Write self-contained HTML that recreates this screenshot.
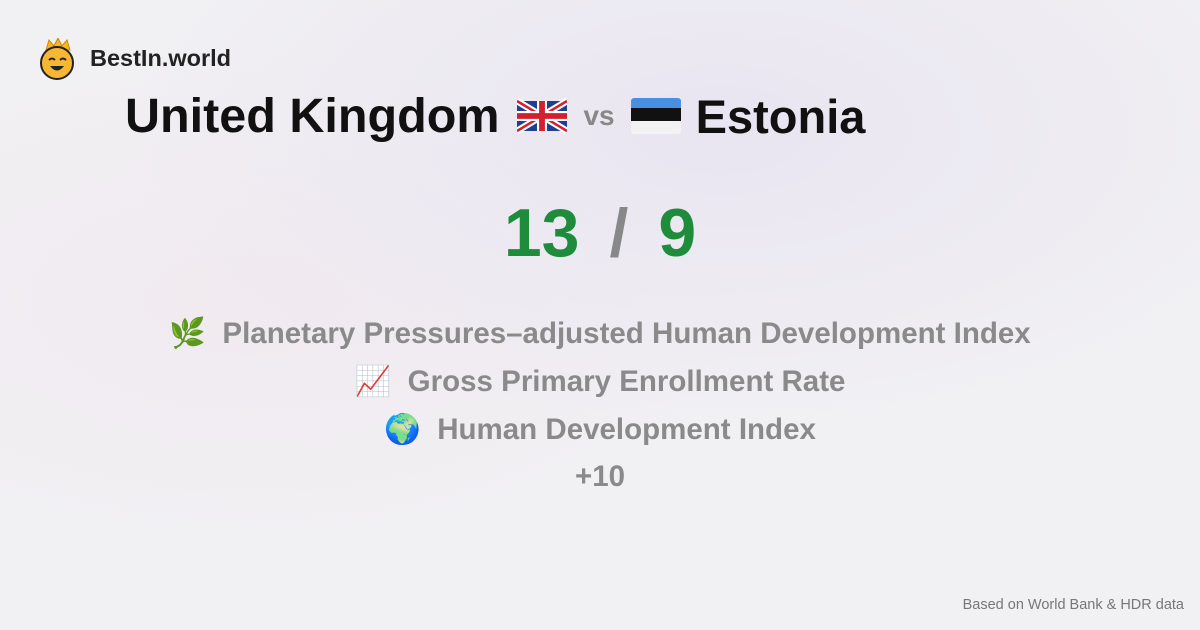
<!DOCTYPE html>
<html><head><style>
body{margin:0;width:1200px;height:630px;overflow:hidden;font-family:"Liberation Sans",sans-serif;
background:radial-gradient(ellipse 600px 300px at 720px 130px,#e9e5f1,transparent),radial-gradient(ellipse 500px 250px at 250px 300px,#f1eaf0,transparent),#f1f0f3;position:relative}
.abs{position:absolute;white-space:nowrap}
.logo{left:40px;top:38px}
.brand{left:90px;top:45px;font-weight:bold;font-size:23.5px;color:#222}
.title{left:125px;top:88px;font-weight:bold;font-size:48.5px;color:#111;display:flex;align-items:center}
.vs{font-size:28px;color:#888;font-weight:bold;margin:0 16px}
.score{left:0;width:1200px;text-align:center;top:194px;font-weight:bold;font-size:68px;color:#1e8c3a}
.score .sl{color:#888;margin:0 30px}
.line{left:0;width:1200px;text-align:center;font-weight:bold;font-size:29.5px;color:#8a8a8a}
.foot{right:16px;top:597px;font-size:14.5px;color:#777}
</style></head><body>
<svg class="abs logo" width="36" height="42" viewBox="0 0 36 42">
<path d="M6 12 L9 2 L14 8 L18 0 L22 8 L27 2 L30 12 Z" fill="#f5b820" stroke="#c98a00"/>
<circle cx="17" cy="25" r="16" fill="#f8b732" stroke="#222" stroke-width="2"/>
<path d="M9 22 q3-3 6 0 M20 22 q3-3 6 0" stroke="#222" stroke-width="2" fill="none"/>
<path d="M10 28 q7 9 14 0 z" fill="#222"/>
</svg>
<div class="abs brand">BestIn.world</div>
<div class="abs title">United Kingdom
<svg width="50" height="36" viewBox="0 0 60 36" style="margin-left:18px"><rect width="60" height="36" rx="3" fill="#1f3f8f"/><path d="M0 0L60 36M60 0L0 36" stroke="#fff" stroke-width="8"/><path d="M0 0L60 36M60 0L0 36" stroke="#d3202f" stroke-width="3"/><path d="M30 0V36M0 18H60" stroke="#fff" stroke-width="12"/><path d="M30 0V36M0 18H60" stroke="#d3202f" stroke-width="7"/></svg>
<span class="vs">vs</span>
<svg width="50" height="36" viewBox="0 0 50 36" style="margin-right:15px"><rect width="50" height="12" rx="3" fill="#4a90e2"/><rect y="10" width="50" height="13" fill="#111"/><rect y="23" width="50" height="13" rx="3" fill="#f2f2f2"/></svg>
<span style="font-size:47px">Estonia</span></div>
<div class="abs score">13<span class="sl">/</span>9</div>
<div class="abs line" style="top:317px">🌿&nbsp; Planetary Pressures–adjusted Human Development Index</div>
<div class="abs line" style="top:365px">📈&nbsp; Gross Primary Enrollment Rate</div>
<div class="abs line" style="top:413px">🌍&nbsp; Human Development Index</div>
<div class="abs line" style="top:460px">+10</div>
<div class="abs foot">Based on World Bank &amp; HDR data</div>
</body></html>
